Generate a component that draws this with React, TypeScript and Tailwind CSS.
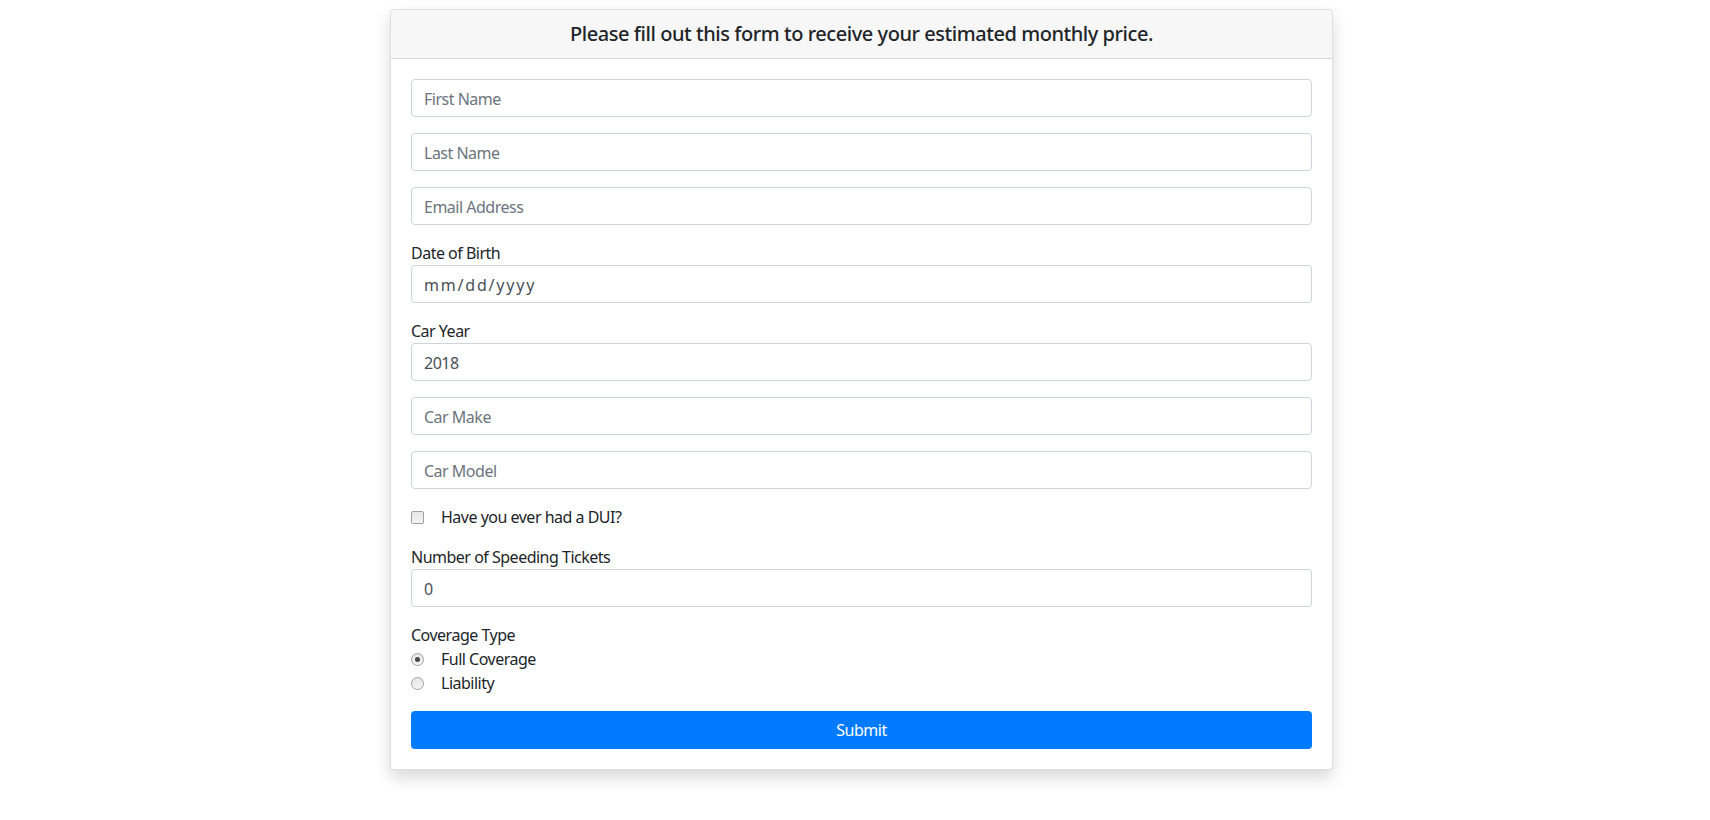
import React from "react";

const inputCls =
  "block w-full h-[38px] px-[12px] pt-[1px] border border-[#ced4da] rounded-[4px] bg-white text-[16px] text-[#495057] placeholder:text-[#6c757d] outline-none";

function Field({
  label,
  placeholder,
  value,
  wide,
}: {
  label?: string;
  placeholder?: string;
  value?: string;
  wide?: boolean;
}) {
  return (
    <div className="mb-[16px]">
      {label && <div className="h-[24px] leading-[24px] text-[16px] text-[#212529]">{label}</div>}
      <input
        className={`${inputCls} ${wide ? "tracking-[1.8px]" : "tracking-[-0.5px]"}`}
        placeholder={placeholder}
        defaultValue={value}
        readOnly={!!value}
      />
    </div>
  );
}

function Radio({ checked, label }: { checked?: boolean; label: string }) {
  return (
    <div className="flex items-center h-[24px]">
      <span className="w-[13px] h-[13px] rounded-full border border-[#a0a0a0] bg-gradient-to-b from-[#e6e6e6] to-[#f4f4f4] flex items-center justify-center">
        {checked && <span className="w-[5px] h-[5px] rounded-full bg-[#4a4a4a]" />}
      </span>
      <span className="ml-[17px] text-[16px] text-[#212529]">{label}</span>
    </div>
  );
}

export default function App() {
  return (
    <div
      className="min-h-screen bg-white pt-[9px] pl-[390px] tracking-[-0.5px]"
      style={{ fontFamily: '"Noto Sans", "Open Sans", sans-serif' }}
    >
      <div className="w-[943px] border border-[rgba(0,0,0,0.125)] rounded-[4px] bg-white shadow-[0_8px_16px_rgba(0,0,0,0.15)]">
        <div className="h-[49px] flex items-center justify-center bg-[#f7f7f7] border-b border-[rgba(0,0,0,0.125)] rounded-t-[3px]">
          <h5 className="text-[20px] leading-[24px] font-medium tracking-[-0.45px] text-[#212529]">
            Please fill out this form to receive your estimated monthly price.
          </h5>
        </div>
        <div className="p-[20px]">
          <Field placeholder="First Name" />
          <Field placeholder="Last Name" />
          <Field placeholder="Email Address" />
          <Field label="Date of Birth" value="mm/dd/yyyy" wide />
          <Field label="Car Year" value="2018" />
          <Field placeholder="Car Make" />
          <Field placeholder="Car Model" />
          <div className="mb-[16px] flex items-center h-[24px]">
            <span className="w-[13px] h-[13px] rounded-[2px] border border-[#a0a0a0] bg-gradient-to-b from-[#e6e6e6] to-[#f4f4f4]" />
            <span className="ml-[17px] text-[16px] text-[#212529]">Have you ever had a DUI?</span>
          </div>
          <Field label="Number of Speeding Tickets" value="0" />
          <div className="mb-[16px]">
            <div className="h-[24px] leading-[24px] text-[16px] text-[#212529]">Coverage Type</div>
            <Radio checked label="Full Coverage" />
            <Radio label="Liability" />
          </div>
          <button className="block w-full h-[38px] rounded-[4px] bg-[#007bff] text-white text-[16px] tracking-[-0.5px]">
            Submit
          </button>
        </div>
      </div>
    </div>
  );
}
